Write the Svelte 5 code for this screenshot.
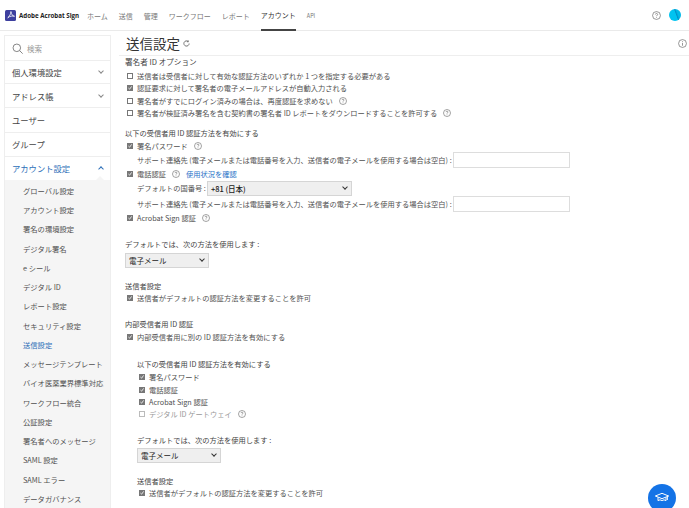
<script>
  const nav = ['ホーム', '送信', '管理', 'ワークフロー', 'レポート', 'アカウント', 'API'];
  const subItems = ['グローバル設定', 'アカウント設定', '署名の環境設定', 'デジタル署名', 'e シール', 'デジタル ID', 'レポート設定', 'セキュリティ設定', '送信設定', 'メッセージテンプレート', 'バイオ医薬業界標準対応', 'ワークフロー統合', '公証設定', '署名者へのメッセージ', 'SAML 設定', 'SAML エラー', 'データガバナンス'];
  const contactLabel = 'サポート連絡先 (電子メールまたは電話番号を入力、送信者の電子メールを使用する場合は空白) :';
</script>

{#snippet help(size = 8)}
  <svg class="help" width={size} height={size} viewBox="0 0 16 16" fill="none" stroke="#666" stroke-width="1.2">
    <circle cx="8" cy="8" r="7" />
    <path d="M6 6.2c0-1.2 1-1.9 2-1.9s2 .7 2 1.8c0 1.5-2 1.6-2 3.2M8 11v1.2" />
  </svg>
{/snippet}

{#snippet check(label, checked = true, tip = false, dim = false)}
  <label class="row" class:dim>
    <span class="box" class:checked>
      {#if checked}
        <svg width="4" height="4" viewBox="0 0 10 10" fill="none" stroke="#fff" stroke-width="2"><path d="M1 5l3 3 5-7" /></svg>
      {/if}
    </span>
    <span>{label}</span>
    {#if tip}{@render help()}{/if}
  </label>
{/snippet}

<div class="page">
  <header>
    <div class="brand">
      <span class="logo">
        <svg width="8" height="8" viewBox="0 0 16 16" fill="none" stroke="#fff" stroke-width="1.6"><path d="M1.5 13.5C5 11 8 5 7.5 2c-.3-1.5 1.2-1.2 1 .5C8.200 6 11 10 15 10.500 12 9.500 5 10 1.500 13.500z" /></svg>
      </span>
      <b>Adobe Acrobat Sign</b>
    </div>
    <nav>
      {#each nav as item}
        <span class:active={item === 'アカウント'} class:small={item === 'API'}>{item}</span>
      {/each}
    </nav>
    <div class="tools">
      {@render help(9)}
      <span class="avatar"></span>
    </div>
  </header>

  <div class="body">
    <aside>
      <div class="search">
        <svg width="11" height="11" viewBox="0 0 16 16" fill="none" stroke="#777" stroke-width="1.300"><circle cx="7" cy="7" r="5.500" /><path d="M11 11l4.500 4.500" /></svg>
        <span>検索</span>
      </div>
      <div class="item">個人環境設定<i class="chev"></i></div>
      <div class="item">アドレス帳<i class="chev"></i></div>
      <div class="item">ユーザー</div>
      <div class="item">グループ</div>
      <div class="item open">アカウント設定<i class="chev up"></i></div>
      <ul>
        {#each subItems as sub}
          <li class:current={sub === '送信設定'}>{sub}</li>
        {/each}
      </ul>
    </aside>

    <main>
      <div class="title">
        <h1>送信設定</h1>
        <svg width="7" height="7" viewBox="0 0 16 16" fill="none" stroke="#555" stroke-width="1.800"><path d="M14 8a6 6 0 1 1-2-4.500M12 1v3h-3" /></svg>
        <span class="info">
          <svg width="9" height="9" viewBox="0 0 16 16" fill="none" stroke="#666" stroke-width="1.200"><circle cx="8" cy="8" r="7" /><path d="M8 7v5M8 4v1.500" /></svg>
        </span>
      </div>

      <div class="content">
        <h2 class="first">署名者 ID オプション</h2>
        <div class="group">
          {@render check('送信者は受信者に対して有効な認証方法のいずれか 1 つを指定する必要がある', false)}
          {@render check('認証要求に対して署名者の電子メールアドレスが自動入力される')}
          {@render check('署名者がすでにログイン済みの場合は、再度認証を求めない', false, true)}
          {@render check('署名者が検証済み署名を含む契約書の署名者 ID レポートをダウンロードすることを許可する', false, true)}
        </div>

        <h2 class="gap-s">以下の受信者用 ID 認証方法を有効にする</h2>
        {@render check('署名パスワード', true, true)}
        <div class="field"><span>{contactLabel}</span><input /></div>
        <div class="row">
          <span class="box checked"><svg width="4" height="4" viewBox="0 0 10 10" fill="none" stroke="#fff" stroke-width="2"><path d="M1 5l3 3 5-7" /></svg></span>
          <span>電話認証</span>
          {@render help()}
          <a href="#top">使用状況を確認</a>
        </div>
        <div class="field country">
          <span>デフォルトの国番号 :</span>
          <div class="select wide">+81 (日本)<i class="chev dark"></i></div>
        </div>
        <div class="field"><span>{contactLabel}</span><input /></div>
        {@render check('Acrobat Sign 認証', true, true)}

        <p class="label gap-l">デフォルトでは、次の方法を使用します :</p>
        <div class="select">電子メール<i class="chev dark"></i></div>

        <h2 class="gap-m">送信者設定</h2>
        {@render check('送信者がデフォルトの認証方法を変更することを許可')}

        <h2 class="gap-l">内部受信者用 ID 認証</h2>
        {@render check('内部受信者用に別の ID 認証方法を有効にする')}

        <div class="nested">
          <h2 class="nested-head">以下の受信者用 ID 認証方法を有効にする</h2>
          {@render check('署名パスワード')}
          {@render check('電話認証')}
          {@render check('Acrobat Sign 認証')}
          {@render check('デジタル ID ゲートウェイ', false, true, true)}

          <p class="label gap-l">デフォルトでは、次の方法を使用します :</p>
          <div class="select tight">電子メール<i class="chev dark"></i></div>

          <h2 class="gap-m">送信者設定</h2>
          {@render check('送信者がデフォルトの認証方法を変更することを許可')}
        </div>
      </div>
    </main>
  </div>

  <button class="fab" aria-label="学習">
    <svg width="16" height="16" viewBox="0 0 24 24" fill="none" stroke="#fff" stroke-width="1.500" stroke-linejoin="round"><path d="M2 9l10-4 10 4-10 4z" /><path d="M6 11v5c2-1.500 4-1.500 6 0 2-1.500 4-1.500 6 0v-5" /><path d="M20 10v5" /></svg>
  </button>
</div>

<style>
  :global(body) {
    margin: 0;
    background: #fff;
  }

  .page {
    position: relative;
    width: 689px;
    height: 508px;
    overflow: hidden;
    font-family: "Noto Sans CJK JP", "Noto Sans", sans-serif;
    font-size: 7.250px;
    color: #505050;
  }

  header {
    height: 30px;
    display: flex;
    align-items: center;
    border-bottom: 1px solid #eaeaea;
    padding: 0 8px 0 5px;
  }

  .brand {
    display: flex;
    align-items: center;
    gap: 3px;
    width: 82px;
    white-space: nowrap;
  }

  .brand b {
    font-family: "Open Sans", sans-serif;
    font-size: 6.200px;
    color: #222;
  }

  .logo {
    width: 11px;
    height: 11px;
    border-radius: 1.500px;
    background: #3d3f9e;
    display: flex;
    align-items: center;
    justify-content: center;
    flex: none;
  }

  nav {
    display: flex;
    gap: 11px;
    height: 100%;
    font-size: 7px;
    color: #777;
  }

  nav span {
    display: flex;
    align-items: center;
    box-sizing: border-box;
    height: 31px;
    padding-top: 1px;
  }

  nav .active {
    color: #333;
    border-bottom: 2px solid #444;
  }

  nav .small {
    font-size: 5.500px;
  }

  .tools {
    margin-left: auto;
    display: flex;
    align-items: center;
    gap: 8px;
  }

  .avatar {
    width: 12px;
    height: 12px;
    border-radius: 50%;
    background: linear-gradient(70deg, #00c3f0 55%, #0090c8 60%, #00b8e8 70%);
  }

  .body {
    display: flex;
    align-items: flex-start;
  }

  aside {
    width: 105px;
    margin: 4px 0 0 4px;
    border: 1px solid #eee;
    border-bottom: 0;
    flex: none;
  }

  .search {
    height: 23px;
    display: flex;
    align-items: center;
    gap: 4px;
    padding-left: 7px;
    padding-top: 1px;
    box-sizing: content-box;
    margin-bottom: -1px;
    color: #999;
    font-size: 7.500px;
    border-bottom: 1px solid #eee;
  }

  .item {
    height: 23.200px;
    display: flex;
    align-items: center;
    justify-content: space-between;
    padding: 0 7px 0 7px;
    font-size: 8.300px;
    color: #444;
    border-bottom: 1px solid #eee;
  }

  .item.open {
    color: #2d6fb8;
    border-bottom: 0;
  }

  .chev {
    width: 3px;
    height: 3px;
    border-right: 1px solid #888;
    border-bottom: 1px solid #888;
    transform: rotate(45deg);
    margin-top: -2px;
    display: inline-block;
  }

  .chev.up {
    transform: rotate(225deg);
    margin-top: 2px;
    border-color: #2d6fb8;
  }

  .chev.dark {
    border-color: #333;
  }

  ul {
    position: relative;
    list-style: none;
    margin: 0;
    padding: 2px 0 0 18px;
    background: #f5f5f5;
  }

  ul::before {
    content: "";
    position: absolute;
    top: -4px;
    right: 6px;
    border-left: 4px solid transparent;
    border-right: 4px solid transparent;
    border-bottom: 4px solid #f5f5f5;
  }

  li {
    height: 19.250px;
    line-height: 19.250px;
    font-size: 7.300px;
    white-space: nowrap;
  }

  li.current {
    color: #2d6fb8;
  }

  main {
    flex: 1;
    min-width: 0;
    margin-left: 8px;
  }

  .title {
    height: 24px;
    display: flex;
    align-items: center;
    gap: 3px;
    border-bottom: 1px solid #eee;
    padding-left: 7px;
    padding-right: 2px;
  }

  h1 {
    margin: 0;
    font-size: 13.500px;
    font-weight: 400;
    color: #333;
  }

  .info {
    margin-left: auto;
    display: flex;
  }

  .content {
    padding-left: 6px;
  }

  h2, .label {
    margin: 0;
    font-size: 7.250px;
    font-weight: 400;
    line-height: 12.300px;
    color: #444;
    white-space: nowrap;
  }

  h2.first {
    font-size: 7.600px;
    line-height: 11px;
    margin-bottom: 3px;
  }

  h2.nested-head {
    margin-bottom: 1px;
  }

  .row {
    display: flex;
    align-items: center;
    gap: 4px;
    height: 12.300px;
    white-space: nowrap;
  }

  .row.dim {
    color: #999;
  }

  .box {
    width: 4px;
    height: 4px;
    margin-left: 2px;
    border: 1px solid #777;
    display: inline-flex;
    align-items: center;
    justify-content: center;
    flex: none;
  }

  .box.checked {
    background: #777;
  }

  .dim .box {
    border-color: #bbb;
  }

  .help {
    flex: none;
    margin-left: 2px;
  }

  a {
    color: #1f73c8;
    text-decoration: none;
    margin-left: 2px;
  }

  .gap-s {
    margin-top: 8px;
  }

  .gap-m {
    margin-top: 12px;
  }

  .gap-l {
    margin-top: 14px;
  }

  .field {
    display: flex;
    align-items: center;
    gap: 1px;
    height: 16.500px;
    padding-left: 12px;
    white-space: nowrap;
  }

  .field.country {
    height: 15px;
  }

  input {
    width: 117px;
    height: 16px;
    box-sizing: border-box;
    border: 1px solid #ddd;
    padding: 0;
    background: #fff;
  }

  .select {
    width: 84px;
    height: 15px;
    box-sizing: border-box;
    border: 1px solid #d5d5d5;
    background: #efefef;
    display: flex;
    align-items: center;
    justify-content: space-between;
    padding: 0 4px 0 3px;
    color: #222;
    font-size: 7.500px;
    margin-top: 2px;
  }

  .select.tight {
    margin-top: 1px;
  }

  .select.wide {
    width: 145px;
    margin-top: 0;
    font-weight: 500;
  }

  .nested {
    padding-left: 12px;
    margin-top: 15px;
  }

  .fab {
    position: absolute;
    left: 648px;
    top: 484px;
    width: 28px;
    height: 28px;
    padding: 0;
    border: 0;
    border-radius: 50%;
    background: #1473e6;
    display: flex;
    align-items: center;
    justify-content: center;
  }
</style>
